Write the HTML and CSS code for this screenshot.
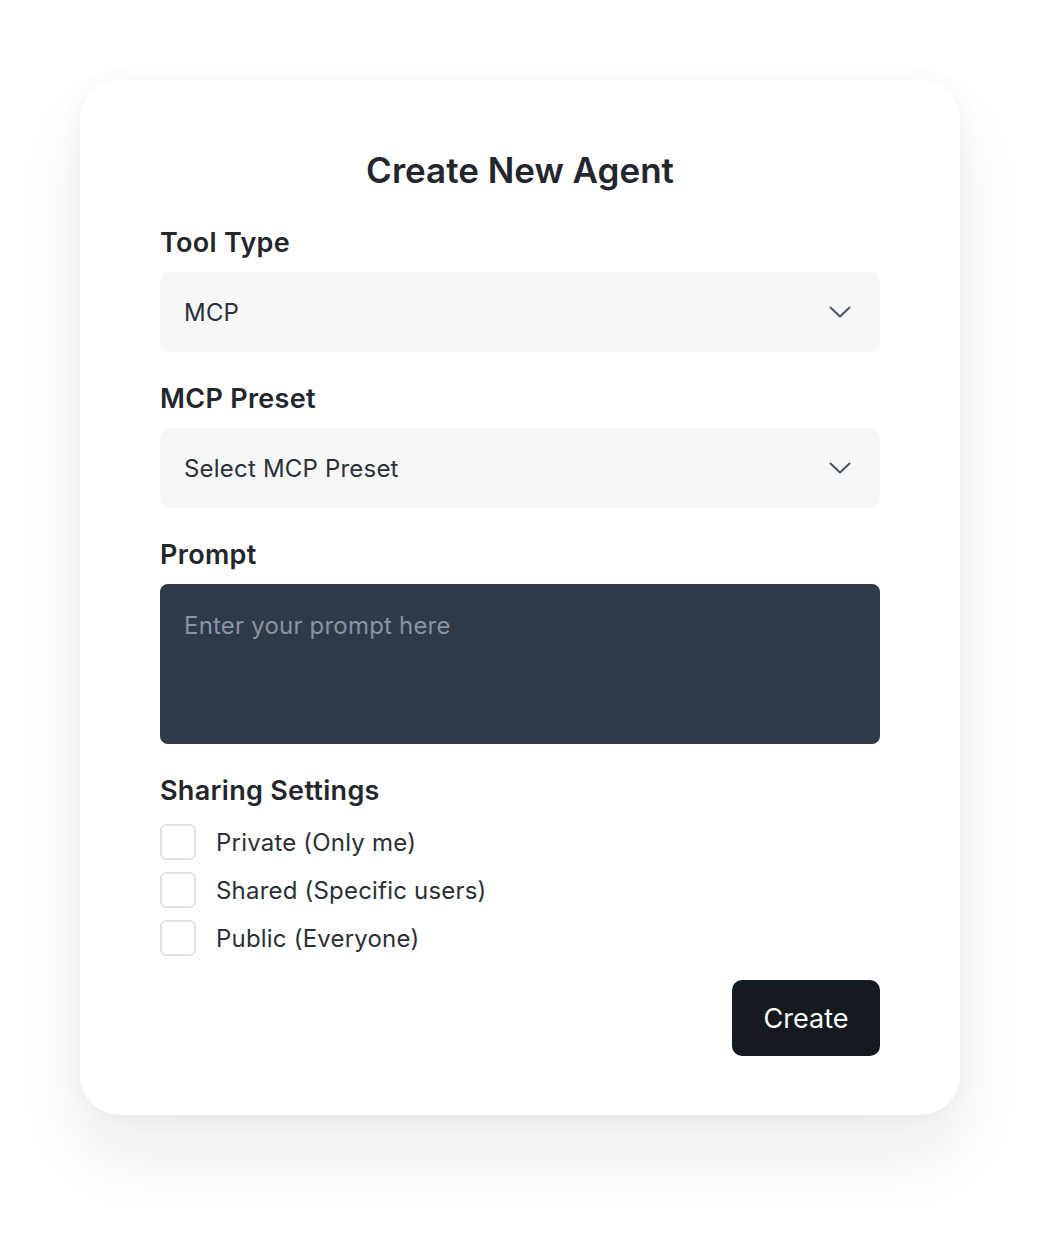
FILE: index.html
```html
<!DOCTYPE html>
<html lang="en">
<head>
<meta charset="utf-8">
<title>Create New Agent</title>
<link rel="stylesheet" href="styles.css">
</head>
<body>
<div class="card">
  <h1 class="title">Create New Agent</h1>

  <div class="field">
    <div class="label">Tool Type</div>
    <div class="select">
      <span class="select-text">MCP</span>
      <svg class="chev" width="22" height="12" viewBox="0 0 22 12"><path d="M1.5 1.5 L11 10.5 L20.5 1.5" fill="none" stroke="#4b5563" stroke-width="2" stroke-linecap="round" stroke-linejoin="round"/></svg>
    </div>
  </div>

  <div class="field">
    <div class="label">MCP Preset</div>
    <div class="select">
      <span class="select-text">Select MCP Preset</span>
      <svg class="chev" width="22" height="12" viewBox="0 0 22 12"><path d="M1.5 1.5 L11 10.5 L20.5 1.5" fill="none" stroke="#4b5563" stroke-width="2" stroke-linecap="round" stroke-linejoin="round"/></svg>
    </div>
  </div>

  <div class="field">
    <div class="label">Prompt</div>
    <div class="textarea"><span class="placeholder">Enter your prompt here</span></div>
  </div>

  <div class="field sharing">
    <div class="label label-sharing">Sharing Settings</div>
    <div class="options">
      <div class="option"><span class="box"></span><span class="opt-text">Private (Only me)</span></div>
      <div class="option"><span class="box"></span><span class="opt-text">Shared (Specific users)</span></div>
      <div class="option"><span class="box"></span><span class="opt-text">Public (Everyone)</span></div>
    </div>
  </div>

  <div class="actions">
    <button class="btn">Create</button>
  </div>
</div>
</body>
</html>
```

FILE: styles.css
```css
* { box-sizing: border-box; }
html, body { margin: 0; padding: 0; background: #ffffff; }
body {
  font-family: Inter, "Noto Sans", sans-serif;
  color: #23272d;
  padding: 80px 80px 125px 80px;
}
.card {
  width: 880px;
  background: #ffffff;
  border-radius: 40px;
  padding: 70px 80px 59px 80px;
  box-shadow: 0 40px 70px rgba(0, 0, 0, 0.08), 0 0 24px rgba(0, 0, 0, 0.035);
}
.title {
  margin: 0 0 37px 0;
  font-size: 35px;
  line-height: 40px;
  font-weight: 600;
  text-align: center;
  letter-spacing: 0;
  color: #23272d;
}
.field { margin-bottom: 31px; }
.label {
  font-size: 27px;
  line-height: 32px;
  font-weight: 600;
  letter-spacing: 0.3px;
  margin-bottom: 13px;
  color: #23272d;
}
.select {
  height: 80px;
  background: #f6f7f9;
  border-radius: 10px;
  display: flex;
  align-items: center;
  justify-content: space-between;
  padding: 0 29px 0 24px;
}
.select-text {
  font-size: 24px;
  letter-spacing: 0.2px;
  color: #2b3037;
}
.chev { display: block; }
.textarea {
  height: 160px;
  background: #2e3a48;
  border-radius: 8px;
  padding: 24px 24px;
}
.placeholder {
  font-size: 24px;
  letter-spacing: 0.2px;
  line-height: 36px;
  color: #8994a1;
}
.sharing { margin-bottom: 24px; }
.label-sharing { margin-bottom: 17px; }
.options {
  display: flex;
  flex-direction: column;
  gap: 12px;
}
.option {
  display: flex;
  align-items: center;
  gap: 20px;
  height: 36px;
}
.box {
  width: 36px;
  height: 36px;
  border: 2px solid #dfe3e8;
  border-radius: 6px;
  background: #ffffff;
}
.opt-text {
  font-size: 24px;
  letter-spacing: 0.2px;
  color: #2b3037;
}
.actions {
  display: flex;
  justify-content: flex-end;
}
.btn {
  width: 148px;
  height: 76px;
  background: #151a21;
  color: #ffffff;
  border: none;
  border-radius: 10px;
  font-family: Inter, "Noto Sans", sans-serif;
  font-size: 27px;
  font-weight: 400;
}
```
